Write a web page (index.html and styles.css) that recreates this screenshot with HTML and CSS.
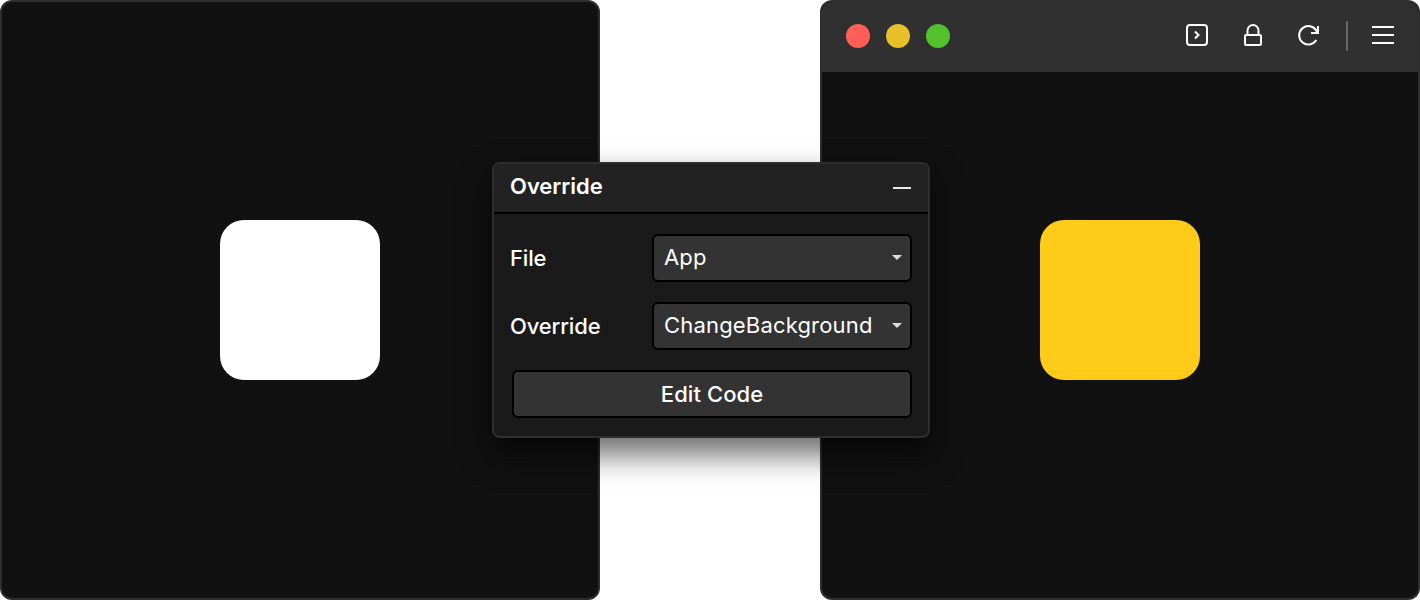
FILE: index.html
```html
<!DOCTYPE html>
<html lang="en">
<head>
<meta charset="utf-8">
<title>Override</title>
<link rel="stylesheet" href="styles.css">
</head>
<body>
<main class="stage">
  <section class="pane">
    <div class="pane-body"><div class="square square-white"></div></div>
  </section>
  <section class="pane pane-window">
    <header class="titlebar">
      <div class="lights">
        <span class="light light-red"></span>
        <span class="light light-yellow"></span>
        <span class="light light-green"></span>
      </div>
      <div class="tools">
        <svg class="icon" width="22" height="24" viewBox="0 0 22 24"><rect x="1" y="1" width="20" height="20" rx="3"/><path d="M9 7.500 12.500 11 9 14.500"/></svg>
        <svg class="icon" width="18" height="24" viewBox="0 0 18 24"><rect x="1" y="11" width="16" height="10" rx="1"/><path d="M3.500 11V6.500a5.500 5.500 0 0 1 11 0V11"/></svg>
        <svg class="icon" width="22" height="24" viewBox="0 0 22 24"><path d="M18.300 16A9.200 9.200 0 1 1 18.500 7L20 9"/><path d="M20 2V9H13"/></svg>
        <span class="tool-sep"></span>
        <svg class="icon" width="22" height="24" viewBox="0 0 22 24"><path d="M0 3H22M0 11H22M0 19H22"/></svg>
      </div>
    </header>
    <div class="pane-body"><div class="square square-yellow"></div></div>
  </section>
</main>
<aside class="panel">
  <header class="panel-head">
    <h1 class="panel-title">Override</h1>
    <span class="panel-min"></span>
  </header>
  <div class="panel-body">
    <div class="field">
      <span class="field-label">File</span>
      <div class="select"><span>App</span><i class="caret"></i></div>
    </div>
    <div class="field">
      <span class="field-label">Override</span>
      <div class="select"><span>ChangeBackground</span><i class="caret"></i></div>
    </div>
    <button class="btn" type="button">Edit Code</button>
  </div>
</aside>
</body>
</html>
```
FILE: styles.css
```css
* { box-sizing: border-box; }
html, body { margin: 0; height: 100%; background: #fff; overflow: hidden; }
body { font-family: Inter, "Liberation Sans", sans-serif; color: #fff; }

.stage { display: flex; justify-content: space-between; width: 1420px; height: 600px; }

.pane {
  width: 600px; height: 600px;
  display: flex; flex-direction: column;
  background: #111;
  border: 2px solid #2e2e2e;
  border-radius: 12px;
  overflow: hidden;
}
.pane-window { border-top-color: #303030; }
.pane-body { flex: 1; display: flex; align-items: center; justify-content: center; }
.pane-window .pane-body { padding-bottom: 70px; }

.square { flex: none; width: 160px; height: 160px; border-radius: 24px; }
.square-white { background: #fff; }
.square-yellow { background: #ffcb19; }

.titlebar {
  flex: none; height: 70px;
  display: flex; align-items: center; justify-content: space-between;
  padding: 0 24px 2px;
  background: #303030;
}
.lights { display: flex; gap: 16px; }
.light { width: 24px; height: 24px; border-radius: 50%; }
.light-red { background: #ff5f57; }
.light-yellow { background: #e6bf29; }
.light-green { background: #53c02d; }

.tools { display: flex; align-items: center; gap: 36px; }
.icon { fill: none; stroke: #fff; stroke-width: 2; display: block; }
.tool-sep { width: 2px; height: 30px; background: #666; margin: 0 -12px 0 -10px; }

.panel {
  position: absolute; left: 492px; top: 162px;
  width: 438px; height: 276px;
  background: #1a1a1a;
  border: 2px solid #2e2e2e;
  border-radius: 8px;
  box-shadow: 0 16px 32px rgba(0,0,0,.6);
  overflow: hidden;
}
.panel-head {
  height: 50px;
  display: flex; align-items: center; justify-content: space-between;
  padding: 0 17px 4px 16px;
  background: #222;
  border-bottom: 2px solid #000;
}
.panel-title { margin: 0; font-size: 22px; font-weight: 600; line-height: 1; letter-spacing: -0.02px; }
.panel-min { width: 18px; height: 2px; background: #e6e6e6; margin-top: 4px; }

.panel-body { display: flex; flex-direction: column; gap: 20px; padding: 20px 16px 0; }
.field { display: flex; align-items: center; justify-content: space-between; height: 48px; }
.field-label { font-size: 22px; font-weight: 500; letter-spacing: -0.15px; }

.select {
  width: 260px; height: 48px;
  display: flex; align-items: center; justify-content: space-between;
  padding: 0 8px 2px 10px;
  background: #333;
  border: 2px solid #000;
  border-radius: 6px;
  font-size: 22px;
  letter-spacing: 0.18px;
}
.caret { width: 0; height: 0; border: 5px solid transparent; border-top-color: #ddd; border-bottom: 0; }

.btn {
  margin-left: 2px;
  width: 400px; height: 48px;
  background: #333;
  border: 2px solid #000;
  border-radius: 6px;
  color: #fff;
  font: 500 22px Inter, "Liberation Sans", sans-serif;
  letter-spacing: 0.08px;
}
```
